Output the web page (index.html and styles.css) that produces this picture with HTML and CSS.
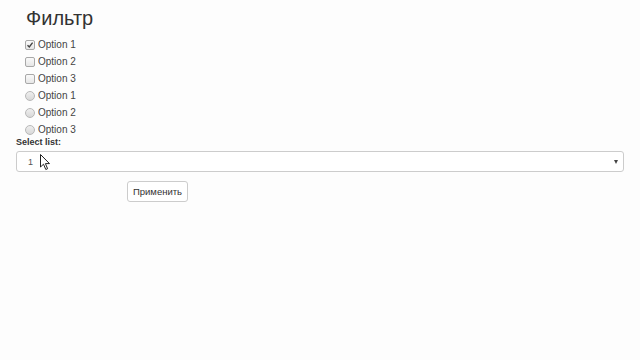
FILE: index.html
```html
<!DOCTYPE html>
<html lang="ru">
<head>
<meta charset="utf-8">
<title>Фильтр</title>
<link rel="stylesheet" href="styles.css">
</head>
<body>
<div class="page">
  <h1 class="title">Фильтр</h1>
  <div class="options">
    <div class="opt"><span class="box checked"><svg viewBox="0 0 8 8" width="8" height="8"><path d="M1.5 4.2 L3.3 6 L6.6 1.6" fill="none" stroke="#444" stroke-width="1.4"/></svg></span><span class="lbl">Option 1</span></div>
    <div class="opt"><span class="box"></span><span class="lbl">Option 2</span></div>
    <div class="opt"><span class="box"></span><span class="lbl">Option 3</span></div>
    <div class="opt"><span class="radio"></span><span class="lbl">Option 1</span></div>
    <div class="opt"><span class="radio"></span><span class="lbl">Option 2</span></div>
    <div class="opt"><span class="radio"></span><span class="lbl">Option 3</span></div>
  </div>
  <div class="field-label">Select list:</div>
  <div class="select"><span class="sel-val">1</span><span class="caret"></span></div>
  <div class="actions"><button class="btn">Применить</button></div>
  <svg class="cursor" width="11" height="17" viewBox="0 0 11 17"><path d="M0.5 0.5 L0.5 13 L3.5 10.2 L5.8 15.5 L7.6 14.7 L5.4 9.6 L9.5 9.6 Z" fill="#fff" stroke="#222" stroke-width="1"/></svg>
</div>
</body>
</html>
```
FILE: styles.css
```css
html, body {
  margin: 0;
  padding: 0;
  background: #fdfdfd;
}
body {
  font-family: "Liberation Sans", Arial, sans-serif;
  color: #333;
}
.page {
  position: relative;
  padding: 0 16px;
  height: 360px;
  box-sizing: border-box;
}
.title {
  margin: 6px 0 0 10px;
  font-size: 20px;
  line-height: 24px;
  font-weight: normal;
  color: #333;
}
.options {
  margin: 6px 0 0 9px;
}
.opt {
  height: 17px;
  display: flex;
  align-items: center;
  gap: 3px;
}
.box {
  width: 8px;
  height: 8px;
  border: 1px solid #a8a8a8;
  border-radius: 2px;
  background: linear-gradient(#fafafa, #e6e6e6);
  display: flex;
  align-items: center;
  justify-content: center;
}
.radio {
  width: 8px;
  height: 8px;
  border: 1px solid #b8b8b8;
  border-radius: 50%;
  background: linear-gradient(#efefef, #d8d8d8);
}
.lbl {
  font-size: 10px;
  color: #444;
}
.field-label {
  margin-top: -1px;
  font-size: 9px;
  font-weight: bold;
  line-height: 11px;
  color: #333;
}
.select {
  margin-top: 3px;
  height: 21px;
  border: 1px solid #ccc;
  border-radius: 3px;
  background: #fff;
  box-sizing: border-box;
  display: flex;
  align-items: center;
  justify-content: space-between;
  padding: 0 5px 0 11px;
}
.sel-val {
  font-size: 9px;
  color: #555;
}
.caret {
  width: 0;
  height: 0;
  border-left: 2.5px solid transparent;
  border-right: 2.5px solid transparent;
  border-top: 4px solid #444;
}
.actions {
  margin: 9px 0 0 111px;
}
.btn {
  font-family: "Liberation Sans", Arial, sans-serif;
  font-size: 9.5px;
  color: #333;
  background: #fff;
  border: 1px solid #ccc;
  border-radius: 3px;
  height: 21px;
  width: 61px;
  padding: 0;
}
.cursor {
  position: absolute;
  left: 40px;
  top: 148px;
}
```
